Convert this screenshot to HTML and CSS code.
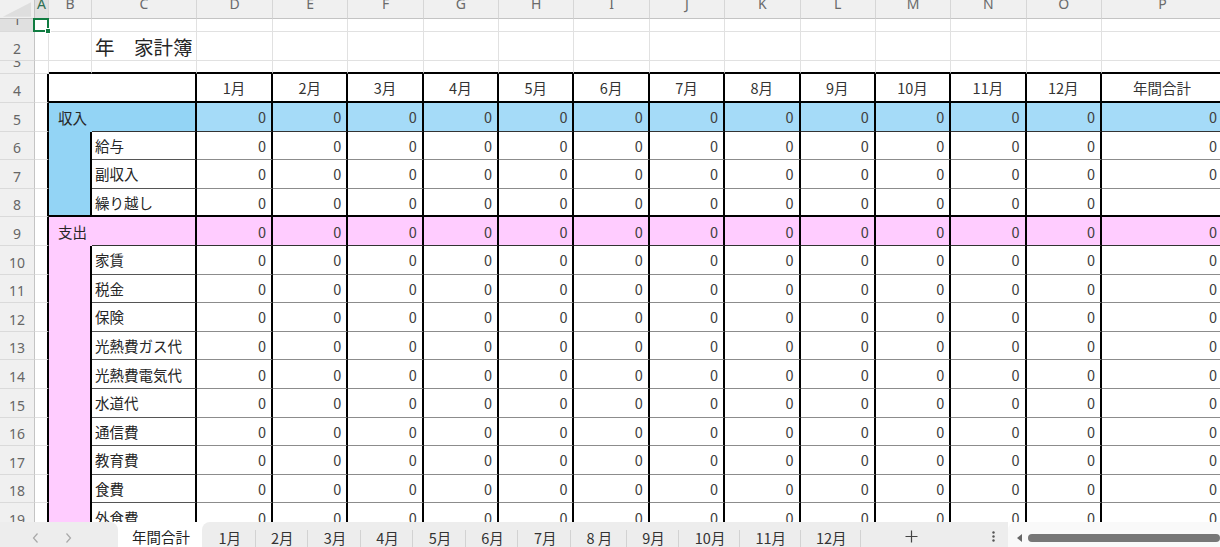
FILE: index.html
```html
<!DOCTYPE html>
<html lang="ja">
<head>
    <meta charset="UTF-8">
    <meta name="viewport" content="width=device-width, initial-scale=1.0">
    <title>家計簿</title>

    <link rel="stylesheet" href="styles.css">
</head>
<body>
    <div class="sheet">
        <div class="grid">
            <!-- column letters -->
            <div class="corner"><svg width="35" height="19" viewBox="0 0 35 19"><polygon points="32,2 32,17 3,17" fill="#dedede"/></svg></div>
            <div class="ch sel">A</div><div class="ch">B</div><div class="ch">C</div><div class="ch">D</div><div class="ch">E</div><div class="ch">F</div><div class="ch">G</div><div class="ch">H</div><div class="ch">I</div><div class="ch">J</div><div class="ch">K</div><div class="ch">L</div><div class="ch">M</div><div class="ch">N</div><div class="ch">O</div><div class="ch">P</div>

            <!-- 1 -->
            <div class="rh sel">1</div><div class="cur"></div>
            <div></div><div></div><div></div><div></div><div></div><div></div><div></div><div></div><div></div><div></div><div></div><div></div><div></div><div></div><div></div>

            <!-- 2 -->
            <div class="rh">2</div><div></div><div></div><div class="title">年　家計簿</div>
            <div></div><div></div><div></div><div></div><div></div><div></div><div></div><div></div><div></div><div></div><div></div><div></div><div></div>

            <!-- 3 -->
            <div class="rh">3</div><div></div>
            <div class="top"></div><div class="top"></div><div class="top"></div><div class="top"></div><div class="top"></div><div class="top"></div><div class="top"></div><div class="top"></div><div class="top"></div><div class="top"></div><div class="top"></div><div class="top"></div><div class="top"></div><div class="top"></div><div class="top"></div>

            <!-- 4 : months -->
            <div class="rh">4</div><div class="edge"></div><div class="hd wide"></div>
            <div class="hd">1月</div><div class="hd">2月</div><div class="hd">3月</div><div class="hd">4月</div><div class="hd">5月</div><div class="hd">6月</div><div class="hd">7月</div><div class="hd">8月</div><div class="hd">9月</div><div class="hd">10月</div><div class="hd">11月</div><div class="hd">12月</div><div class="hd">年間合計</div>

            <!-- 5 : income total -->
            <div class="rh">5</div><div class="edge"></div><div class="name inc">収入</div><div class="lb sum inc"></div>
            <div class="v sum inc2">0</div><div class="v sum inc2">0</div><div class="v sum inc2">0</div><div class="v sum inc2">0</div><div class="v sum inc2">0</div><div class="v sum inc2">0</div><div class="v sum inc2">0</div><div class="v sum inc2">0</div><div class="v sum inc2">0</div><div class="v sum inc2">0</div><div class="v sum inc2">0</div><div class="v sum inc2">0</div><div class="v sum inc2">0</div>

            <!-- 6 -->
            <div class="rh">6</div><div class="edge"></div><div class="grp grp3 inc"></div><div class="lb">給与</div>
            <div class="v">0</div><div class="v">0</div><div class="v">0</div><div class="v">0</div><div class="v">0</div><div class="v">0</div><div class="v">0</div><div class="v">0</div><div class="v">0</div><div class="v">0</div><div class="v">0</div><div class="v">0</div><div class="v">0</div>

            <!-- 7 -->
            <div class="rh">7</div><div class="edge"></div><div class="lb">副収入</div>
            <div class="v">0</div><div class="v">0</div><div class="v">0</div><div class="v">0</div><div class="v">0</div><div class="v">0</div><div class="v">0</div><div class="v">0</div><div class="v">0</div><div class="v">0</div><div class="v">0</div><div class="v">0</div><div class="v">0</div>

            <!-- 8 -->
            <div class="rh">8</div><div class="edge"></div><div class="lb end">繰り越し</div>
            <div class="v end">0</div><div class="v end">0</div><div class="v end">0</div><div class="v end">0</div><div class="v end">0</div><div class="v end">0</div><div class="v end">0</div><div class="v end">0</div><div class="v end">0</div><div class="v end">0</div><div class="v end">0</div><div class="v end">0</div><div class="v end"></div>

            <!-- 9 : spending total -->
            <div class="rh">9</div><div class="edge"></div><div class="name exp">支出</div><div class="lb sum exp"></div>
            <div class="v sum exp">0</div><div class="v sum exp">0</div><div class="v sum exp">0</div><div class="v sum exp">0</div><div class="v sum exp">0</div><div class="v sum exp">0</div><div class="v sum exp">0</div><div class="v sum exp">0</div><div class="v sum exp">0</div><div class="v sum exp">0</div><div class="v sum exp">0</div><div class="v sum exp">0</div><div class="v sum exp">0</div>

            <!-- 10 -->
            <div class="rh">10</div><div class="edge"></div><div class="grp grp10 exp"></div><div class="lb">家賃</div>
            <div class="v">0</div><div class="v">0</div><div class="v">0</div><div class="v">0</div><div class="v">0</div><div class="v">0</div><div class="v">0</div><div class="v">0</div><div class="v">0</div><div class="v">0</div><div class="v">0</div><div class="v">0</div><div class="v">0</div>

            <!-- 11 -->
            <div class="rh">11</div><div class="edge"></div><div class="lb">税金</div>
            <div class="v">0</div><div class="v">0</div><div class="v">0</div><div class="v">0</div><div class="v">0</div><div class="v">0</div><div class="v">0</div><div class="v">0</div><div class="v">0</div><div class="v">0</div><div class="v">0</div><div class="v">0</div><div class="v">0</div>

            <!-- 12 -->
            <div class="rh">12</div><div class="edge"></div><div class="lb">保険</div>
            <div class="v">0</div><div class="v">0</div><div class="v">0</div><div class="v">0</div><div class="v">0</div><div class="v">0</div><div class="v">0</div><div class="v">0</div><div class="v">0</div><div class="v">0</div><div class="v">0</div><div class="v">0</div><div class="v">0</div>

            <!-- 13 -->
            <div class="rh">13</div><div class="edge"></div><div class="lb">光熱費ガス代</div>
            <div class="v">0</div><div class="v">0</div><div class="v">0</div><div class="v">0</div><div class="v">0</div><div class="v">0</div><div class="v">0</div><div class="v">0</div><div class="v">0</div><div class="v">0</div><div class="v">0</div><div class="v">0</div><div class="v">0</div>

            <!-- 14 -->
            <div class="rh">14</div><div class="edge"></div><div class="lb">光熱費電気代</div>
            <div class="v">0</div><div class="v">0</div><div class="v">0</div><div class="v">0</div><div class="v">0</div><div class="v">0</div><div class="v">0</div><div class="v">0</div><div class="v">0</div><div class="v">0</div><div class="v">0</div><div class="v">0</div><div class="v">0</div>

            <!-- 15 -->
            <div class="rh">15</div><div class="edge"></div><div class="lb">水道代</div>
            <div class="v">0</div><div class="v">0</div><div class="v">0</div><div class="v">0</div><div class="v">0</div><div class="v">0</div><div class="v">0</div><div class="v">0</div><div class="v">0</div><div class="v">0</div><div class="v">0</div><div class="v">0</div><div class="v">0</div>

            <!-- 16 -->
            <div class="rh">16</div><div class="edge"></div><div class="lb">通信費</div>
            <div class="v">0</div><div class="v">0</div><div class="v">0</div><div class="v">0</div><div class="v">0</div><div class="v">0</div><div class="v">0</div><div class="v">0</div><div class="v">0</div><div class="v">0</div><div class="v">0</div><div class="v">0</div><div class="v">0</div>

            <!-- 17 -->
            <div class="rh">17</div><div class="edge"></div><div class="lb">教育費</div>
            <div class="v">0</div><div class="v">0</div><div class="v">0</div><div class="v">0</div><div class="v">0</div><div class="v">0</div><div class="v">0</div><div class="v">0</div><div class="v">0</div><div class="v">0</div><div class="v">0</div><div class="v">0</div><div class="v">0</div>

            <!-- 18 -->
            <div class="rh">18</div><div class="edge"></div><div class="lb">食費</div>
            <div class="v">0</div><div class="v">0</div><div class="v">0</div><div class="v">0</div><div class="v">0</div><div class="v">0</div><div class="v">0</div><div class="v">0</div><div class="v">0</div><div class="v">0</div><div class="v">0</div><div class="v">0</div><div class="v">0</div>

            <!-- 19 -->
            <div class="rh">19</div><div class="edge"></div><div class="lb">外食費</div>
            <div class="v">0</div><div class="v">0</div><div class="v">0</div><div class="v">0</div><div class="v">0</div><div class="v">0</div><div class="v">0</div><div class="v">0</div><div class="v">0</div><div class="v">0</div><div class="v">0</div><div class="v">0</div><div class="v">0</div>
        </div>
    </div>

    <div class="tabs">
        <div class="nav">
            <svg width="7" height="10" viewBox="0 0 7 10"><polyline points="5.5,0.5 1.5,5 5.5,9.5" fill="none" stroke="#a8a8a8" stroke-width="1.2"/></svg>
            <svg width="7" height="10" viewBox="0 0 7 10"><polyline points="1.5,0.5 5.5,5 1.5,9.5" fill="none" stroke="#a8a8a8" stroke-width="1.2"/></svg>
        </div>
        <div class="tab current">年間合計</div>
        <div class="strip">
            <div class="tab first">1月</div>
            <div class="tab">2月</div>
            <div class="tab">3月</div>
            <div class="tab">4月</div>
            <div class="tab">5月</div>
            <div class="tab">6月</div>
            <div class="tab">7月</div>
            <div class="tab">8 月</div>
            <div class="tab">9月</div>
            <div class="tab">10月</div>
            <div class="tab">11月</div>
            <div class="tab">12月</div>
            <div class="add"><svg width="13" height="13" viewBox="0 0 13 13"><path d="M6.5 0.5v12M0.5 6.5h12" stroke="#444" stroke-width="1.2"/></svg></div>
            <div class="more"><svg width="3" height="11" viewBox="0 0 3 11"><circle cx="1.5" cy="1.5" r="1.2" fill="#555"/><circle cx="1.5" cy="5.5" r="1.2" fill="#555"/><circle cx="1.5" cy="9.5" r="1.2" fill="#555"/></svg></div>
        </div>
        <div class="scroll">
            <svg width="5" height="8" viewBox="0 0 5 8"><polygon points="5,0 5,8 0,4" fill="#666"/></svg>
            <div class="thumb"></div>
        </div>
    </div>
</body>
</html>
```

FILE: styles.css
```css
body
{
    margin: 0;
    width: 1220px;
    height: 547px;
    overflow: hidden;
    background: #fff;
    font-family: "Noto Sans CJK JP", sans-serif;
    color: #262626;
}

.sheet
{
    height: 522px;
    overflow: hidden;
}

.grid
{
    display: grid;
    grid-template-columns: 35px 14px 43px 105px 76px repeat(11, 75.36px) 122px;
    grid-template-rows: 19px 13px 29px 13px 29px repeat(15, 28.6px);
    font-size: 14.5px;
}

/* every cell gets the light sheet gridline on its right and bottom */
.grid > *
{
    box-sizing: border-box;
    display: flex;
    align-items: center;
    overflow: hidden;
    white-space: nowrap;
    border-right: 1px solid #e1e1e1;
    border-bottom: 1px solid #e1e1e1;
}

.corner
{
    background: #f0f0f0;
    border-right: 1px solid #c4c4c4;
    border-bottom: 1px solid #c4c4c4;
}

.ch
{
    justify-content: center;
    align-items: flex-start;
    background: #f0f0f0;
    border-right: 1px solid #d6d6d6;
    border-bottom: 1px solid #c4c4c4;
    font-family: "Noto Sans", sans-serif;
    font-size: 14px;
    line-height: 7px;
    color: #6a6a6a;
}

.rh
{
    justify-content: center;
    align-items: flex-end;
    padding-bottom: 4px;
    background: #f0f0f0;
    border-right: 1px solid #c4c4c4;
    border-bottom: 1px solid #dadada;
    font-family: "Noto Sans", sans-serif;
    font-size: 14px;
    line-height: 14px;
    color: #666;
}

.ch.sel,
.rh.sel
{
    background: #e0e0e0;
}

.ch.sel
{
    color: #2f6f52;
}

/* selected cell A1 */
.cur
{
    position: relative;
    overflow: visible;
}

.cur::after
{
    content: "";
    position: absolute;
    left: -2px;
    top: -1px;
    right: -1px;
    bottom: -1px;
    border: 2px solid #107c41;
}

.cur::before
{
    content: "";
    position: absolute;
    right: -3px;
    bottom: -3px;
    width: 4px;
    height: 4px;
    background: #107c41;
    border: 1px solid #fff;
    z-index: 1;
}

.title
{
    padding-left: 3px;
    font-size: 19.5px;
    color: #262626;
}

.top
{
    border-bottom: 2px solid #000;
}

.edge
{
    border-right: 2px solid #000;
}

.hd
{
    justify-content: center;
    border-right: 2px solid #000;
    border-bottom: 2px solid #000;
    color: #333;
}

.wide
{
    grid-column: span 2;
}

.name
{
    padding-left: 9px;
    border-right: 0;
    border-bottom: 0;
}

.lb
{
    padding-left: 3px;
    border-right: 2px solid #000;
    border-bottom: 1px solid #555;
}

.v
{
    justify-content: flex-end;
    padding-right: 5px;
    border-right: 2px solid #000;
    border-bottom: 1px solid #8c8c8c;
    color: #404040;
}

.grp
{
    border-right: 2px solid #000;
    border-bottom: 2px solid #000;
}

.grp3
{
    grid-row: span 3;
}

.grp10
{
    grid-row: span 10;
}

.sum
{
    border-bottom: 1px solid #333;
}

.end
{
    border-bottom: 2px solid #000;
}

.inc
{
    background: #93d4f5;
}

.inc2
{
    background: #a5dbf8;
}

.exp
{
    background: #ffccff;
}

/* sheet tabs along the bottom */
.tabs
{
    display: flex;
    height: 25px;
    font-size: 14.5px;
    line-height: 20px;
    color: #333;
}

.nav
{
    flex: none;
    width: 118px;
    box-sizing: border-box;
    display: flex;
    align-items: flex-start;
    gap: 26px;
    padding: 11px 0 0 32px;
    background: #ededed;
    border-top-right-radius: 8px;
}

.tab
{
    flex: none;
    padding: 6px 13.5px 0 16.5px;
    background: linear-gradient(#d2d2d2, #d2d2d2) left 8px / 1px 100% no-repeat;
}

.tab.first
{
    background: none;
}

.tab.current
{
    width: 84px;
    box-sizing: border-box;
    padding: 5px 0 0 2px;
    text-align: center;
    background: #fff;
    color: #222;
}

.strip
{
    flex: none;
    width: 806px;
    display: flex;
    background: #ededed;
    border-top-left-radius: 8px;
}

.add
{
    flex: none;
    width: 102px;
    display: flex;
    justify-content: center;
    padding-top: 8px;
    background: linear-gradient(#d2d2d2, #d2d2d2) left 8px / 1px 100% no-repeat;
}

.more
{
    flex: none;
    width: 28px;
    margin-left: 17px;
    display: flex;
    justify-content: center;
    padding-top: 9px;
}

.scroll
{
    flex: 1;
    display: flex;
    align-items: center;
    gap: 6px;
    padding: 6px 0 0 9px;
    background: #f9f9f9;
    border-top-left-radius: 8px;
}

.thumb
{
    flex: 1;
    height: 8px;
    border-radius: 4px;
    background: #777;
}
```
